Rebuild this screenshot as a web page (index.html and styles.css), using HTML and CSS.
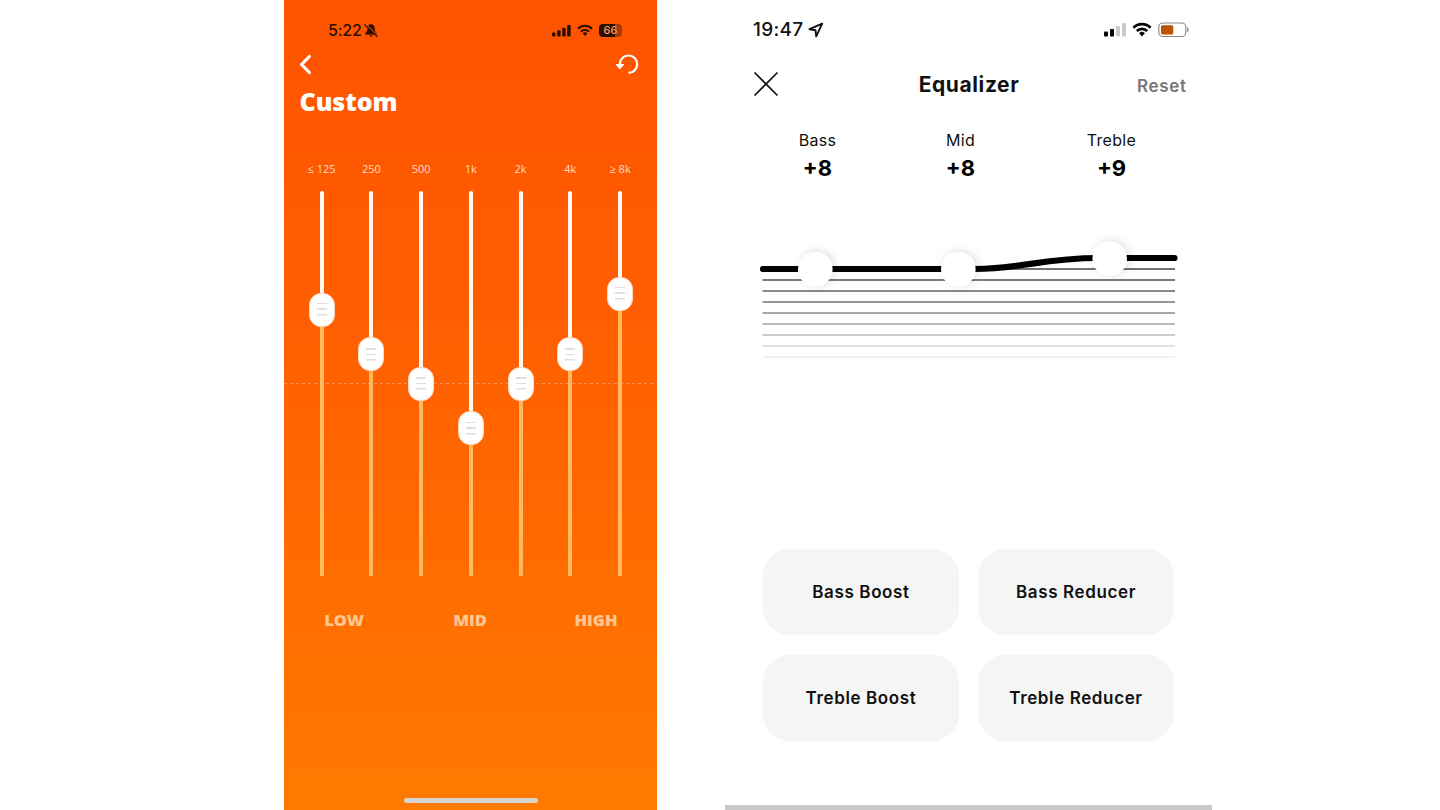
FILE: index.html
```html
<!DOCTYPE html>
<html lang="en">
<head>
<meta charset="utf-8">
<title>Equalizer</title>
<link rel="stylesheet" href="styles.css">
</head>
<body>
<main class="stage">
  <section class="phone custom">
    <header class="custom-status">
      <div class="custom-clock">
        <span>5:22</span>
        <svg width="14" height="15" viewBox="0 0 14 15"><path d="M7 1.100C5 1.300 3.500 3 3.400 5.200c0 3-.8 3.900-2.200 5.300v1h11.700v-1c-1.400-1.400-2.200-2.300-2.200-5.300C10.600 3 9 1.300 7 1.100zM5.200 12.200a1.900 1.900 0 0 0 3.700 0z" fill="#2b0f03"/><path d="M1.100 1l12.500 11.400" stroke="#ff5600" stroke-width="1.300"/><path d="M.6 1.800l12.600 11.500" stroke="#2b0f03" stroke-width="1.200" stroke-linecap="round"/></svg>
      </div>
      <div class="custom-signals">
        <svg width="19" height="13" viewBox="0 0 19 13" fill="#2b0f03"><rect x="0" y="8.500" width="3.500" height="4" rx="1"/><rect x="5.100" y="6.300" width="3.500" height="6.200" rx="1"/><rect x="10.200" y="3.700" width="3.500" height="8.800" rx="1"/><rect x="15.200" y="1" width="3.500" height="11.500" rx="1"/></svg>
        <svg width="16" height="13" viewBox="0 0 16 13" fill="none" stroke="#2b0f03" stroke-width="2"><path d="M1 4.700a10 10 0 0 1 14 0"/><path d="M3.800 7.600a6 6 0 0 1 8.400 0"/><path d="M5.700 9.500L8 12l2.300-2.500a3.200 3.200 0 0 0-4.600 0z" fill="#2b0f03" stroke="none"/></svg>
        <div class="charge"><span>66</span></div>
      </div>
    </header>
    <nav class="custom-nav">
      <svg width="14" height="22" viewBox="0 0 14 22"><path d="M10.400 3.500L2.500 11.500l7.900 8" fill="none" stroke="#fff" stroke-width="3.200" stroke-linecap="round" stroke-linejoin="round"/></svg>
      <svg width="24" height="24" viewBox="0 0 24 24"><path d="M4.800 14.500v-2.300a8.700 8.700 0 1 1 8.700 8.700" fill="none" stroke="#fff" stroke-width="2.200"/><path d="M1.400 12.500l3.400 4 3.600-4z" fill="#fff" stroke="#fff" stroke-width="1.200" stroke-linejoin="round"/></svg>
    </nav>
    <h1 class="custom-title">Custom</h1>
    <div class="bands">
      <div class="band"><span class="freq">≤ 125</span><i class="gain" style="height:101.500px"></i><b class="knob"></b><i class="rest"></i></div>
      <div class="band"><span class="freq">250</span><i class="gain" style="height:146px"></i><b class="knob"></b><i class="rest"></i></div>
      <div class="band"><span class="freq">500</span><i class="gain" style="height:175.500px"></i><b class="knob"></b><i class="rest"></i></div>
      <div class="band"><span class="freq">1k</span><i class="gain" style="height:220px"></i><b class="knob"></b><i class="rest"></i></div>
      <div class="band"><span class="freq">2k</span><i class="gain" style="height:175.500px"></i><b class="knob"></b><i class="rest"></i></div>
      <div class="band"><span class="freq">4k</span><i class="gain" style="height:146px"></i><b class="knob"></b><i class="rest"></i></div>
      <div class="band"><span class="freq">≥ 8k</span><i class="gain" style="height:85.500px"></i><b class="knob"></b><i class="rest"></i></div>
    </div>
    <div class="ranges"><span>LOW</span><span>MID</span><span>HIGH</span></div>
    <div class="home-bar"></div>
  </section>

  <section class="phone equalizer">
    <header class="eq-status">
      <div class="eq-clock">
        <span>19:47</span>
        <svg width="16" height="16" viewBox="0 0 16 16"><path d="M14.200 1.600L1.500 7.200l6 1.100.7 6z" fill="none" stroke="#111" stroke-width="1.900" stroke-linejoin="round"/></svg>
      </div>
      <div class="eq-signals">
        <svg width="22" height="15" viewBox="0 0 22 15"><g fill="#050505"><rect y="9.500" width="4" height="5" rx="1"/><rect x="6" y="7" width="4" height="7.500" rx="1"/></g><g fill="#cbcbcb"><rect x="12" y="4" width="4" height="10.500" rx="1"/><rect x="18" y="1" width="4" height="13.500" rx="1"/></g></svg>
        <svg width="20" height="15" viewBox="0 0 20 15" fill="none" stroke="#050505" stroke-width="2.700"><path d="M1.400 5.700a12.300 12.300 0 0 1 17.200 0"/><path d="M4.800 9a7.400 7.400 0 0 1 10.400 0"/><path d="M7.100 11.300L10 14.400l2.900-3.100a4.100 4.100 0 0 0-5.800 0z" fill="#050505" stroke="none"/></svg>
        <svg width="32" height="16" viewBox="0 0 32 16"><rect x=".8" y="1" width="27" height="13.500" rx="4" fill="none" stroke="#8b8580" stroke-width="1.100"/><rect x="3" y="3.200" width="12.300" height="9.200" rx="1.500" fill="#bd5200"/><path d="M29.500 5.500q1.800 2.200 0 4.500z" fill="#858585" stroke="#858585" stroke-width=".6"/></svg>
      </div>
    </header>
    <nav class="eq-nav">
      <svg width="26" height="26" viewBox="0 0 26 26"><path d="M1.500 1.500l23 23M24.500 1.500l-23 23" stroke="#111" stroke-width="1.700"/></svg>
      <h2 class="eq-title">Equalizer</h2>
      <span class="reset">Reset</span>
    </nav>
    <div class="levels">
      <div class="level"><span class="level-name">Bass</span><span class="level-value">+8</span></div>
      <div class="level"><span class="level-name">Mid</span><span class="level-value">+8</span></div>
      <div class="level"><span class="level-name">Treble</span><span class="level-value">+9</span></div>
    </div>
    <svg class="curve" width="487" height="160" viewBox="725 220 487 160">
      <defs><filter id="lift" x="-60%" y="-60%" width="220%" height="220%"><feDropShadow dx="2" dy="-1" stdDeviation="4.500" flood-color="#000" flood-opacity=".14"/></filter></defs>
      <g stroke-width="1.500" fill="none">
        <path d="M762.500 269H1175" stroke="#454545"/>
        <path d="M762.500 280H1175" stroke="#505050"/>
        <path d="M762.500 291H1175" stroke="#606060"/>
        <path d="M762.500 302H1175" stroke="#747474"/>
        <path d="M762.500 313H1175" stroke="#888"/>
        <path d="M762.500 324H1175" stroke="#a1a1a1"/>
        <path d="M762.500 335H1175" stroke="#bdbdbd"/>
        <path d="M762.500 346H1175" stroke="#d8d8d8"/>
        <path d="M762.500 357H1175" stroke="#ececec"/>
      </g>
      <path d="M763 269H975C1021 269 1043 258 1099 258H1174.500" fill="none" stroke="#000" stroke-width="6.200" stroke-linecap="round"/>
      <g fill="#fff" filter="url(#lift)"><circle cx="815.300" cy="269.300" r="17.300"/><circle cx="958.300" cy="269.300" r="17.300"/><circle cx="1109.700" cy="258.800" r="17.300"/></g>
    </svg>
    <div class="presets">
      <button class="preset">Bass Boost</button>
      <button class="preset">Bass Reducer</button>
      <button class="preset">Treble Boost</button>
      <button class="preset">Treble Reducer</button>
    </div>
    <div class="eq-footer"></div>
  </section>
</main>
</body>
</html>
```

FILE: styles.css
```css
* { box-sizing: border-box; }
body { margin: 0; background: #fff; }
svg { display: block; flex: none; }
.stage { display: flex; gap: 68px; width: 1440px; height: 810px; padding-left: 284px; overflow: hidden; }
.phone { display: flex; flex-direction: column; height: 810px; flex: none; }

.custom { width: 373px; background: linear-gradient(#ff5300, #ff5d00 35%, #ff6800 62%, #ff7a00); color: #fff; font-family: "Open Sans", sans-serif; }
.custom-status { display: flex; justify-content: space-between; align-items: center; height: 50px; padding: 11px 35px 0 44px; color: #2b0f03; }
.custom-clock { display: flex; align-items: center; gap: 2px; font: 500 16px/20px Inter, sans-serif; letter-spacing: -.2px; }
.custom-clock span { margin-top: -1px; }
.custom-signals { display: flex; align-items: center; gap: 6px; }
.charge { width: 23px; height: 13px; border-radius: 4px; background: linear-gradient(90deg, #2b0f03 70%, #a43a08 70%); color: #ff9a62; font: 500 11px/13px Inter, sans-serif; text-align: center; }
.custom-nav { display: flex; justify-content: space-between; align-items: center; height: 28px; padding: 0 18px 0 15px; }
.custom-title { margin: 6px 0 0 15.500px; height: 34px; font-size: 25px; line-height: 34px; font-weight: 800; letter-spacing: -.05px; }
.bands { display: grid; grid-template-columns: repeat(7, 49.750px); margin-top: 43px; padding-left: 12.700px; height: 415px; background: repeating-linear-gradient(90deg, #ff8d4b 0 3px, transparent 3px 6px) 0 222px / 100% 1px no-repeat; }
.band { display: flex; flex-direction: column; align-items: center; height: 415px; }
.freq { height: 30px; flex: none; font-size: 11px; line-height: 15px; color: #ffdac6; white-space: nowrap; }
.gain { width: 4px; flex: none; background: #fffaf3; border-radius: 2px 2px 0 0; }
.rest { width: 4px; flex: 1; background: #ffb95e; }
.knob { width: 26px; height: 34px; flex: none; border: 1px solid #ffd8bf; border-radius: 12px; background: linear-gradient(#dedede 0 1.500px, transparent 1.500px 5.500px, #dedede 5.500px 7px, transparent 7px 11px, #dedede 11px 12.500px) center / 10px 12.500px no-repeat #fff; }
.ranges { display: grid; grid-template-columns: 120px 132px 120px; margin-top: 32px; text-align: center; font-size: 16.500px; line-height: 24px; font-weight: 800; letter-spacing: -.1px; color: #ffc78f; }
.home-bar { width: 134px; height: 5px; margin: auto auto 7px 120px; border-radius: 3px; background: #d7d3ce; }

.equalizer { width: 487px; color: #111; font-family: Inter, sans-serif; }
.eq-status { display: flex; justify-content: space-between; align-items: center; height: 59px; padding: 0 22px 0 28px; }
.eq-clock { display: flex; align-items: center; gap: 5px; font: 500 19px/24px Inter, sans-serif; letter-spacing: .3px; }
.eq-signals { display: flex; align-items: center; gap: 6px; }
.eq-nav { display: grid; grid-template-columns: 26px 1fr 50px; align-items: center; height: 50px; padding: 0 25px 0 28px; }
.eq-title { margin: 0; padding: 1px 0 0 22px; text-align: center; font-size: 21px; line-height: 26px; font-weight: 700; letter-spacing: .6px; }
.reset { padding-top: 4px; font-size: 17px; line-height: 22px; font-weight: 600; letter-spacing: .7px; color: #777; white-space: nowrap; }
.levels { display: grid; grid-template-columns: 143px 143px 159px; padding: 21px 0 0 21px; height: 111px; }
.level { display: flex; flex-direction: column; align-items: center; }
.level-name { height: 23px; font-size: 16px; line-height: 21px; letter-spacing: .3px; }
.level-value { font-size: 22px; line-height: 30px; font-weight: 700; color: #000; }
.presets { display: grid; grid-template-columns: 196px 196px; grid-auto-rows: 85.500px; gap: 20.500px 19px; margin: 169px 0 0 38px; }
.preset { padding: 0; border: 0; border-radius: 27px; background: #f5f5f5; color: #111; font: 600 17px/24px Inter, sans-serif; letter-spacing: .62px; }
.eq-footer { height: 5px; margin-top: auto; background: #c8c8c8; }
```
